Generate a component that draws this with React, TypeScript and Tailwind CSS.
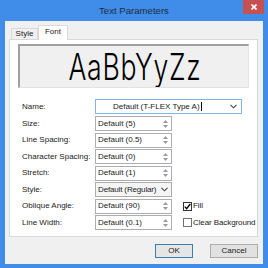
import React from "react";

function Spin() {
  return (
    <div className="flex flex-col items-center justify-center gap-[2px] w-[11px] h-full">
      <svg width="5" height="3" viewBox="0 0 5 3"><path d="M0 3 L2.5 0 L5 3 Z" fill="#9a9a9a" /></svg>
      <svg width="5" height="3" viewBox="0 0 5 3"><path d="M0 0 L2.5 3 L5 0 Z" fill="#9a9a9a" /></svg>
    </div>
  );
}

function Chevron() {
  return (
    <svg width="7" height="5" viewBox="0 0 7 5" className="shrink-0">
      <path d="M0.5 0.8 L3.5 3.8 L6.5 0.8" fill="none" stroke="#444" strokeWidth="1.1" />
    </svg>
  );
}

function SpinInput({ value }: { value: string }) {
  return (
    <div className="w-[77px] h-full bg-white border border-[#abadb3] flex items-center pl-[2px]">
      <span className="flex-1 text-[8px] leading-none text-[#1a1a1a] whitespace-nowrap">{value}</span>
      <Spin />
    </div>
  );
}

function Row({ label, children }: { label: string; children: React.ReactNode }) {
  return (
    <div className="flex items-center h-[15px]">
      <div className="w-[73px] text-[8px] leading-none text-[#1a1a1a] whitespace-nowrap">{label}</div>
      {children}
    </div>
  );
}

function Check({ checked, label }: { checked: boolean; label: string }) {
  return (
    <div className="flex items-center ml-[11px] gap-[1px]">
      <div className={"w-[9px] h-[9px] bg-white border flex items-center justify-center " + (checked ? "border-[#333333]" : "border-[#707070]")}>
        {checked && (
          <svg width="7" height="7" viewBox="0 0 7 7"><path d="M0.8 3.6 L2.6 5.6 L6.3 1" fill="none" stroke="#000" strokeWidth="1.4" /></svg>
        )}
      </div>
      <span className="text-[8px] leading-none text-[#1a1a1a] whitespace-nowrap tracking-[-0.1px]">{label}</span>
    </div>
  );
}

export default function App() {
  return (
    <div className="w-[268px] h-[268px] bg-[#3f8ce9] flex flex-col font-['Liberation_Sans',Arial,sans-serif] overflow-hidden">
      <div className="h-[21px] relative flex items-center justify-center">
        <span className="text-[9.6px] text-[#1f2d3d] leading-none">Text Parameters</span>
        <div className="absolute right-[4px] top-0 w-[21px] h-[14px] bg-[#c75050] flex items-center justify-center">
          <svg width="6" height="6" viewBox="0 0 6 6"><path d="M0.5 0.5 L5.5 5.5 M5.5 0.5 L0.5 5.5" stroke="#fff" strokeWidth="1.6" /></svg>
        </div>
      </div>
      <div className="mx-[5px] h-[243px] bg-[#f0f0f0] flex flex-col pl-[4px] pr-[5px]">
        <div className="h-[18px] flex items-end pl-[2px]">
          <div className="w-[27px] h-[11px] border border-b-0 border-[#d9d9d9] bg-[#f0f0f0] flex items-center justify-center text-[8px] leading-none text-[#1a1a1a]">Style</div>
          <div className="w-[30px] h-[15px] border border-b-0 border-[#d9d9d9] bg-white -mb-px relative z-10 flex items-start justify-center pt-[2px] text-[8px] leading-none text-[#1a1a1a]">Font</div>
        </div>
        <div className="h-[198px] border border-[#d9d9d9] bg-white flex flex-col">
          <div className="mt-[4px] ml-[8px] w-[231px] h-[44px] bg-[#f0f0f0] border-t-2 border-l-2 border-[#a0a0a0] border-r border-b border-r-[#e3e3e3] border-b-[#e3e3e3] flex items-center justify-center overflow-hidden">
            <span className="inline-block scale-x-[0.72] font-['Inter',sans-serif] font-[260] text-[37px] leading-none text-black tracking-[1px] pl-[3px]">AaBbYyZz</span>
          </div>
          <div className="mt-[11px] pl-[12px] flex flex-col">
            <Row label="Name:">
              <div className="w-[147px] h-full bg-white border border-[#7eb4ea] flex items-center pr-[4px]">
                <span className="flex-1 pl-[17px] text-[8px] leading-none text-[#1a1a1a] whitespace-nowrap">Default (T-FLEX Type A)<span className="inline-block w-[1px] h-[9px] bg-black align-middle ml-[1px]" /></span>
                <Chevron />
              </div>
            </Row>
            <div className="mt-[2px] flex flex-col gap-[1.5px]">
              <Row label="Size:"><SpinInput value="Default (5)" /></Row>
              <Row label="Line Spacing:"><SpinInput value="Default (0.5)" /></Row>
              <Row label="Character Spacing:"><SpinInput value="Default (0)" /></Row>
              <Row label="Stretch:"><SpinInput value="Default (1)" /></Row>
              <Row label="Style:">
                <div className="w-[77px] h-full bg-[#f5f5f5] border border-[#acacac] flex items-center pl-[2px] pr-[3px]">
                  <span className="flex-1 text-[8px] leading-none text-[#1a1a1a] whitespace-nowrap tracking-[-0.15px]">Default (Regular)</span>
                  <Chevron />
                </div>
              </Row>
              <Row label="Oblique Angle:">
                <SpinInput value="Default (90)" />
                <Check checked label="Fill" />
              </Row>
              <Row label="Line Width:">
                <SpinInput value="Default (0.1)" />
                <Check checked={false} label="Clear Background" />
              </Row>
            </div>
          </div>
        </div>
        <div className="mt-[7px] flex justify-end gap-[17px]">
          <div className="w-[38px] h-[14px] bg-[#e5e5e5] border border-[#3c7fb1] flex items-center justify-center text-[8px] leading-none text-[#1a1a1a]">OK</div>
          <div className="w-[48px] h-[14px] bg-[#e1e1e1] border border-[#adadad] flex items-center justify-center text-[8px] leading-none text-[#1a1a1a]">Cancel</div>
        </div>
      </div>
    </div>
  );
}
